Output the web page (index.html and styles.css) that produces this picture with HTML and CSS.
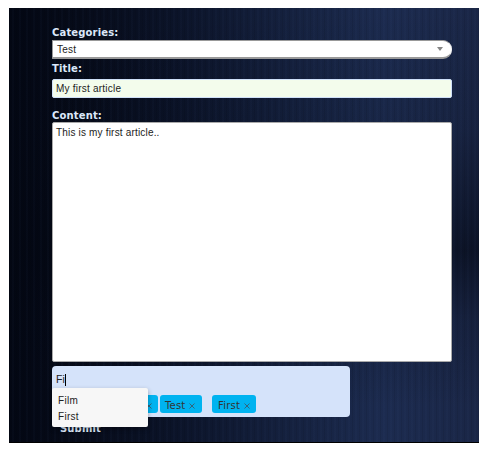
FILE: index.html
```html
<!DOCTYPE html>
<html lang="en">
<head>
<meta charset="utf-8">
<title>Article</title>
<link rel="stylesheet" href="styles.css">
</head>
<body>
<form class="panel">
  <div class="label label-cat"><span>Categories:</span></div>
  <div class="select"><span>Test</span><svg class="arrow" width="6" height="4" viewBox="0 0 6 4"><path d="M0 0H6L3 4Z" fill="#858585"/></svg></div>
  <div class="label label-title"><span>Title:</span></div>
  <div class="input">My first article</div>
  <div class="label label-content"><span>Content:</span></div>
  <div class="textarea">This is my first article..</div>
  <div class="tags">
    <div class="entry"><span>Fi</span><i class="caret"></i></div>
    <div class="chips">
      <span class="chip chip-under"><svg class="x" width="6" height="6" viewBox="0 0 6 6"><path d="M.5 .5L5.5 5.5M5.5 .5L.5 5.5"/></svg></span>
      <span class="chip chip-test"><span>Test</span><svg class="x" width="6" height="6" viewBox="0 0 6 6"><path d="M.5 .5L5.5 5.5M5.5 .5L.5 5.5"/></svg></span>
      <span class="chip chip-first"><span>First</span><svg class="x" width="6" height="6" viewBox="0 0 6 6"><path d="M.5 .5L5.5 5.5M5.5 .5L.5 5.5"/></svg></span>
    </div>
    <div class="menu"><div>Film</div><div>First</div></div>
  </div>
  <div class="submit">Submit</div>
</form>
</body>
</html>
```
FILE: styles.css
```css
* { box-sizing: border-box; }
body { margin: 0; background: #fff; font-family: "Liberation Sans", Arial, sans-serif; font-size: 10px; color: #222; }
.panel {
  width: 470px; height: 435px; margin: 8px 0 0 9px; padding: 18px 27px 0 43px;
  overflow: hidden; border-bottom: 1px solid #000;
  background:
    repeating-linear-gradient(90deg, rgba(0,0,0,.07) 0 1px, transparent 1px 3px, rgba(90,120,180,.03) 3px 5px, transparent 5px 7px),
    linear-gradient(180deg, rgba(3,7,18,0) 0%, rgba(3,7,18,.15) 28%, rgba(3,7,18,.62) 56%, rgba(3,7,18,.2) 72%, rgba(3,7,18,0) 92%),
    linear-gradient(90deg, #030713 0%, #060b19 15%, #0b1328 35%, #14203d 58%, #1c2b4f 80%, #1a2646 100%);
}
.label, .submit { font: bold 10px/14px "DejaVu Sans", Verdana, sans-serif; color: #dce8fa; white-space: nowrap; letter-spacing: .15px; }
.label-cat { height: 14px; }
.select {
  display: flex; align-items: center; justify-content: space-between;
  width: 400px; height: 19px; padding: 0 8px 0 4px; letter-spacing: .25px;
  background: #fff; border: 1px solid #999; border-bottom-width: 2px; border-right-color: #eee; border-radius: 1px 9px 9px 1px;
}
.arrow { display: block; }
.label-title { margin-top: 3px; height: 17px; }
.input { height: 19px; padding-left: 3px; border: 1px solid #cfe0f8; border-radius: 2px; background: #f3fcec; line-height: 17px; letter-spacing: .22px; }
.label-content { margin-top: 11px; height: 13px; }
.textarea { height: 240px; padding: 3px 0 0 3px; border: 1px solid #aaa; border-radius: 2px; background: #fff; line-height: 14px; letter-spacing: .18px; }
.tags { position: relative; width: 298px; height: 51px; margin-top: 4px; border-radius: 4px; background: #d5e3fa; }
.entry { display: flex; align-items: center; height: 29px; padding: 0 0 2px 4px; font-size: 10.5px; }
.entry span { line-height: 15px; }
.caret { width: 1px; height: 12px; background: #000; }
.chips { display: flex; padding-left: 60px; }
.chip {
  display: flex; align-items: center; height: 18px; padding-top: 3px; border-radius: 3px; background: #00b3f0;
  font: 10px/14px "DejaVu Sans", sans-serif; color: #333; letter-spacing: .2px; white-space: nowrap;
}
.chip-under { width: 46px; padding-left: 34px; }
.chip-test { width: 42px; margin-left: 2px; padding-left: 5px; justify-content: space-between; padding-right: 7px; }
.chip-first { width: 44px; margin-left: 10px; padding-left: 6px; justify-content: space-between; padding-right: 6px; }
.x { fill: none; stroke: #33657c; stroke-width: 1; margin-top: 1px; }
.menu {
  position: absolute; left: 0; top: 22px; width: 96px; height: 39px; padding: 5px 6px; z-index: 1;
  border-radius: 2px; background: #f7f7f7; box-shadow: 0 2px 5px rgba(0,0,0,.3);
  font-size: 10px; line-height: 16px; letter-spacing: .3px;
}
.submit { margin: 5px 0 0 8px; }
```
